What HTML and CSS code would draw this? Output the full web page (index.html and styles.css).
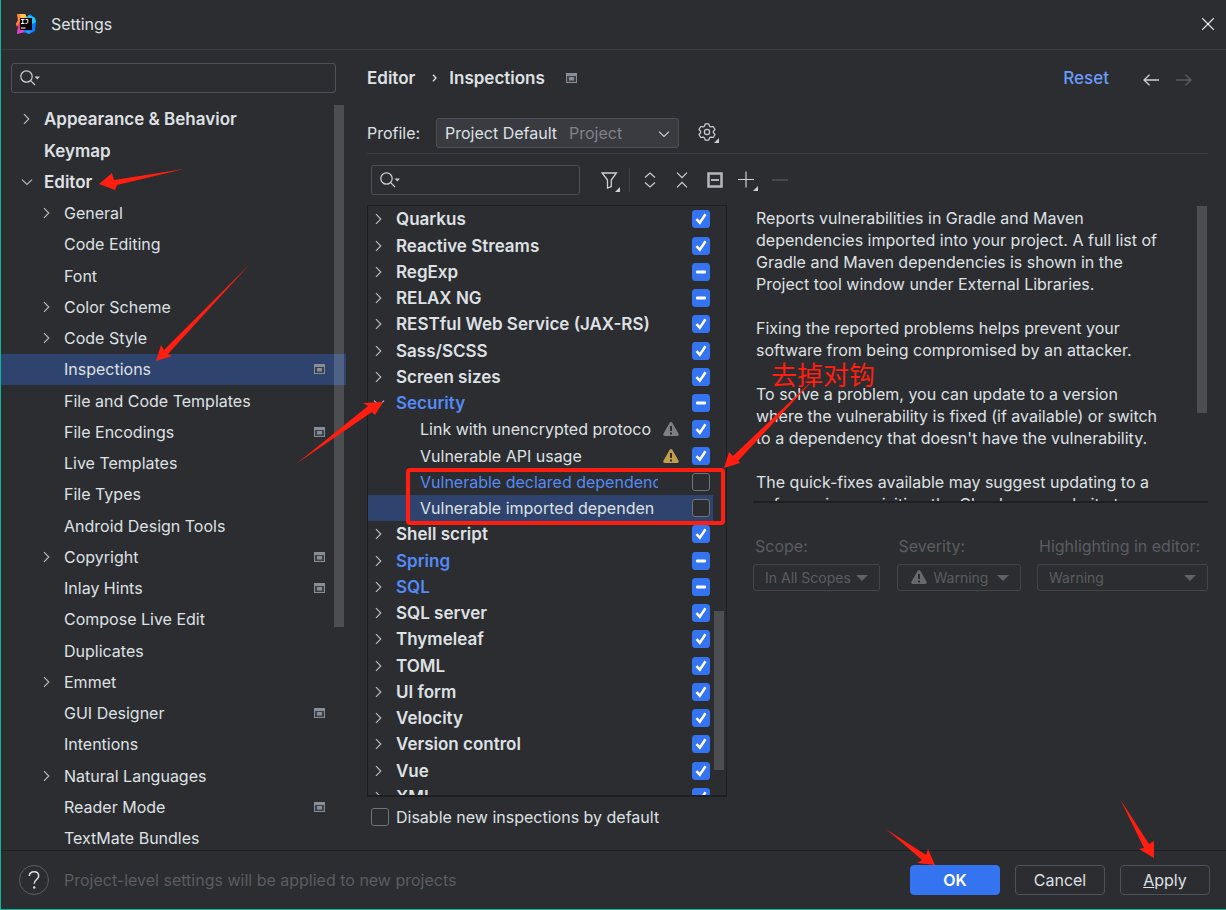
FILE: index.html
```
<!DOCTYPE html>
<html lang="en">
<head>
<meta charset="utf-8">
<title>Settings</title>
<link rel="stylesheet" href="styles.css">
</head>
<body>
<svg class="defs" aria-hidden="true">
  <symbol id="right" viewBox="0 0 12 12"><path d="M3 1.200 7.800 6 3 10.800" fill="none" stroke="currentColor" stroke-width="1.200"/></symbol>
  <symbol id="down" viewBox="0 0 12 12"><path d="M1 3.600 6 8.400l5-4.800" fill="none" stroke="currentColor" stroke-width="1.200"/></symbol>
  <symbol id="badge" viewBox="0 0 11 10"><path d="M0 0h11v10H0z" fill="#868e98"/><path d="M1 3h9v6H1z" fill="#3b4046"/><path d="M3 4h5v3.500H3z" fill="#868e98"/></symbol>
  <symbol id="search" viewBox="0 0 20 16"><circle cx="6.500" cy="6.500" r="5.700" fill="none" stroke="currentColor" stroke-width="1.200"/><path d="m10.700 10.700 4.300 4.300" stroke="currentColor" stroke-width="1.200"/><path d="M14.500 6.500H20l-2.750 3z" fill="currentColor"/></symbol>
  <symbol id="warn" viewBox="0 0 16 14"><path d="M8 0c.6 0 1 .3 1.300.8l6.300 11c.6 1-.1 2.200-1.300 2.200H1.700C.5 14-.2 12.800.4 11.800l6.300-11C7 .3 7.400 0 8 0z" fill="currentColor"/><path d="M7 4h2v5H7zM7 10.500h2v2H7z" fill="#2b2d30"/></symbol>
</svg>
<div class="window">
  <header class="titlebar">
    <svg class="logo" viewBox="0 0 20 20" aria-hidden="true">
      <path d="M1 0h8l2 5v14l-4-1-6 2 1-8-2-2 2-4z" fill="#fe2f6d"/>
      <path d="M1 0h8l2 4-7 3-3 6-1-3 2-4z" fill="#ff8a3c"/>
      <path d="m4 0 5 0 2 4-6 1z" fill="#fdc84a"/>
      <path d="m1 20 1-6 4 2 3 2z" fill="#d844d8"/>
      <path d="m11 3 3-3 5 4 1 4-1 9-6 3-5-2z" fill="#087cfa"/>
      <path d="m11 3 2-2 6 3 1 4-4 2z" fill="#21c4fb"/>
      <path d="m9 17h7l-3 3z" fill="#21a4fb"/>
      <path d="M4 4h12v12H4z" fill="#0b0509"/>
      <path d="M5 5.500h3.500M6.750 5.500v4M5 9.500h3.500M9.500 5.500h2.300v3q0 1-2.300 1M5 14h4.500" fill="none" stroke="#fff" stroke-width="1"/>
    </svg>
    <h1 class="window-title">Settings</h1>
    <button class="icon-button close" aria-label="Close"><svg viewBox="0 0 12 12"><path d="m.3.3 11.400 11.400M11.700.3.3 11.700" stroke="#fff" stroke-width="1.100"/></svg></button>
  </header>

  <div class="content">
    <aside class="sidebar">
      <label class="search side-search"><svg class="search-icon"><use href="#search"/></svg><input type="text" aria-label="Search settings"></label>
      <div class="tree-view">
        <ul class="tree" role="tree">
          <li class="node top"><svg class="chev"><use href="#right"/></svg><span>Appearance &amp; Behavior</span></li>
          <li class="node top"><i></i><span>Keymap</span></li>
          <li class="node top"><svg class="chev"><use href="#down"/></svg><span>Editor</span></li>
          <li class="node"><svg class="chev"><use href="#right"/></svg><span>General</span></li>
          <li class="node"><i></i><span>Code Editing</span></li>
          <li class="node"><i></i><span>Font</span></li>
          <li class="node"><svg class="chev"><use href="#right"/></svg><span>Color Scheme</span></li>
          <li class="node"><svg class="chev"><use href="#right"/></svg><span>Code Style</span></li>
          <li class="node selected"><i></i><span>Inspections</span><svg class="badge"><use href="#badge"/></svg></li>
          <li class="node"><i></i><span>File and Code Templates</span></li>
          <li class="node"><i></i><span>File Encodings</span><svg class="badge"><use href="#badge"/></svg></li>
          <li class="node"><i></i><span>Live Templates</span></li>
          <li class="node"><i></i><span>File Types</span></li>
          <li class="node"><i></i><span>Android Design Tools</span></li>
          <li class="node"><svg class="chev"><use href="#right"/></svg><span>Copyright</span><svg class="badge"><use href="#badge"/></svg></li>
          <li class="node"><i></i><span>Inlay Hints</span><svg class="badge"><use href="#badge"/></svg></li>
          <li class="node"><i></i><span>Compose Live Edit</span></li>
          <li class="node"><i></i><span>Duplicates</span></li>
          <li class="node"><svg class="chev"><use href="#right"/></svg><span>Emmet</span></li>
          <li class="node"><i></i><span>GUI Designer</span><svg class="badge"><use href="#badge"/></svg></li>
          <li class="node"><i></i><span>Intentions</span></li>
          <li class="node"><svg class="chev"><use href="#right"/></svg><span>Natural Languages</span></li>
          <li class="node"><i></i><span>Reader Mode</span><svg class="badge"><use href="#badge"/></svg></li>
          <li class="node"><i></i><span>TextMate Bundles</span></li>
        </ul>
        <div class="thumb side-thumb"></div>
      </div>
    </aside>

    <main class="main">
      <div class="crumbs">
        <span>Editor</span><svg class="crumb-sep" viewBox="0 0 5 8"><path d="M1 .7 4 4 1 7.300" fill="none" stroke="currentColor" stroke-width="1.300"/></svg><span>Inspections</span>
        <svg class="badge"><use href="#badge"/></svg>
        <a class="reset" href="#">Reset</a>
        <button class="icon-button nav" aria-label="Back"><svg viewBox="0 0 16 12"><path d="M6.500.7 1 6l5.500 5.300M1 6h15" fill="none" stroke="currentColor" stroke-width="1.300"/></svg></button>
        <button class="icon-button nav" aria-label="Forward" disabled><svg viewBox="0 0 16 12"><path d="M9.500.7 15 6l-5.500 5.300M15 6H0" fill="none" stroke="currentColor" stroke-width="1.300"/></svg></button>
      </div>

      <div class="profile">
        <label for="profile">Profile:</label>
        <div class="profile-select">
          <select id="profile"><option>Project Default</option></select>
          <span class="profile-scope">Project</span>
          <svg class="select-chev"><use href="#down"/></svg>
        </div>
        <button class="icon-button gear" aria-label="Profile actions"><svg viewBox="0 0 22 20"><path d="M7.100 1.200h3.800l.9 2.500 1.300.8 2.700-.5 1.900 3.300-1.800 2v1.400l1.800 2-1.900 3.300-2.700-.5-1.300.8-.9 2.500H7.100l-.9-2.500-1.300-.8-2.700.5-1.900-3.300 1.800-2V9.300l-1.800-2L2.200 4l2.700.5 1.300-.8z" transform="translate(.7 -.2) scale(.92)" fill="none" stroke="currentColor" stroke-width="1.300" stroke-linejoin="round"/><circle cx="9" cy="9" r="2.600" fill="none" stroke="currentColor" stroke-width="1.200"/><path d="M21 15v5h-5z" fill="currentColor"/></svg></button>
      </div>

      <div class="inspection-pane">
        <section class="left">
          <div class="toolbar">
            <label class="search"><svg class="search-icon"><use href="#search"/></svg><input type="text" aria-label="Search inspections"></label>
            <button class="icon-button filter" aria-label="Filter"><svg viewBox="0 0 20 20"><path d="M1.200 1h14.200L10.300 8v6.500L6.500 16V8z" fill="none" stroke="currentColor" stroke-width="1.300"/><path d="M19 15v5h-5z" fill="currentColor"/></svg></button>
            <span class="rule"></span>
            <button class="icon-button tool" aria-label="Expand all"><svg viewBox="0 0 12 16"><path d="M1 5.500 6 1l5 4.500M1 10.500 6 15l5-4.500" fill="none" stroke="currentColor" stroke-width="1.200"/></svg></button>
            <button class="icon-button tool" aria-label="Collapse all"><svg viewBox="0 0 12 16"><path d="m1 .7 5 5 5-5M1 15.300l5-5 5 5" fill="none" stroke="currentColor" stroke-width="1.200"/></svg></button>
            <button class="icon-button square" aria-label="Reset to empty"><svg viewBox="0 0 16 16"><path d="M1.500 1.500h13v13h-13z" fill="none" stroke="currentColor" stroke-width="2.500"/><path d="M4 8h8" stroke="currentColor" stroke-width="2"/></svg></button>
            <button class="icon-button plus" aria-label="Add"><svg viewBox="0 0 20 20"><path d="M0 8.500h16M8 .5v16" stroke="currentColor" stroke-width="1.200"/><path d="M20 15v5h-5z" fill="currentColor"/></svg></button>
            <button class="icon-button minus" aria-label="Remove" disabled><svg viewBox="0 0 16 2"><path d="M0 1h16" stroke="currentColor" stroke-width="1.200"/></svg></button>
          </div>
          <div class="list">
            <ul class="rows">
              <li class="row"><svg class="chev"><use href="#right"/></svg><label for="c1">Quarkus</label><i></i><input type="checkbox" id="c1" checked></li>
              <li class="row"><svg class="chev"><use href="#right"/></svg><label for="c2">Reactive Streams</label><i></i><input type="checkbox" id="c2" checked></li>
              <li class="row"><svg class="chev"><use href="#right"/></svg><label for="c3">RegExp</label><i></i><input type="checkbox" id="c3" class="partial"></li>
              <li class="row"><svg class="chev"><use href="#right"/></svg><label for="c4">RELAX NG</label><i></i><input type="checkbox" id="c4" class="partial"></li>
              <li class="row"><svg class="chev"><use href="#right"/></svg><label for="c5">RESTful Web Service (JAX-RS)</label><i></i><input type="checkbox" id="c5" checked></li>
              <li class="row"><svg class="chev"><use href="#right"/></svg><label for="c6">Sass/SCSS</label><i></i><input type="checkbox" id="c6" checked></li>
              <li class="row"><svg class="chev"><use href="#right"/></svg><label for="c7">Screen sizes</label><i></i><input type="checkbox" id="c7" checked></li>
              <li class="row changed"><svg class="chev"><use href="#down"/></svg><label for="c8">Security</label><i></i><input type="checkbox" id="c8" class="partial"></li>
              <li class="row child"><i></i><label for="c9">Link with unencrypted protoco</label><svg class="warn weak"><use href="#warn"/></svg><input type="checkbox" id="c9" checked></li>
              <li class="row child"><i></i><label for="c10">Vulnerable API usage</label><svg class="warn"><use href="#warn"/></svg><input type="checkbox" id="c10" checked></li>
              <li class="row child changed"><i></i><label for="c11">Vulnerable declared dependency</label><i></i><input type="checkbox" id="c11"></li>
              <li class="row child selected"><i></i><label for="c12">Vulnerable imported dependen</label><i></i><input type="checkbox" id="c12"></li>
              <li class="row"><svg class="chev"><use href="#right"/></svg><label for="c13">Shell script</label><i></i><input type="checkbox" id="c13" checked></li>
              <li class="row changed"><svg class="chev"><use href="#right"/></svg><label for="c14">Spring</label><i></i><input type="checkbox" id="c14" class="partial"></li>
              <li class="row changed"><svg class="chev"><use href="#right"/></svg><label for="c15">SQL</label><i></i><input type="checkbox" id="c15" class="partial"></li>
              <li class="row"><svg class="chev"><use href="#right"/></svg><label for="c16">SQL server</label><i></i><input type="checkbox" id="c16" checked></li>
              <li class="row"><svg class="chev"><use href="#right"/></svg><label for="c17">Thymeleaf</label><i></i><input type="checkbox" id="c17" checked></li>
              <li class="row"><svg class="chev"><use href="#right"/></svg><label for="c18">TOML</label><i></i><input type="checkbox" id="c18" checked></li>
              <li class="row"><svg class="chev"><use href="#right"/></svg><label for="c19">UI form</label><i></i><input type="checkbox" id="c19" checked></li>
              <li class="row"><svg class="chev"><use href="#right"/></svg><label for="c20">Velocity</label><i></i><input type="checkbox" id="c20" checked></li>
              <li class="row"><svg class="chev"><use href="#right"/></svg><label for="c21">Version control</label><i></i><input type="checkbox" id="c21" checked></li>
              <li class="row"><svg class="chev"><use href="#right"/></svg><label for="c22">Vue</label><i></i><input type="checkbox" id="c22" checked></li>
              <li class="row"><svg class="chev"><use href="#right"/></svg><label for="c23">XML</label><i></i><input type="checkbox" id="c23" checked></li>
            </ul>
            <div class="thumb list-thumb"></div>
          </div>
          <div class="disable-new"><input type="checkbox" id="disable"><label for="disable">Disable new inspections by default</label></div>
        </section>

        <section class="right">
          <div class="description">
            <p>Reports vulnerabilities in Gradle and Maven dependencies imported into your project. A full list of Gradle and Maven dependencies is shown in the Project tool window under External Libraries.</p>
            <p>Fixing the reported problems helps prevent your software from being compromised by an attacker.</p>
            <p>To solve a problem, you can update to a version where the vulnerability is fixed (if available) or switch to a dependency that doesn't have the vulnerability.</p>
            <p>The quick-fixes available may suggest updating to a safe version or visiting the Checkmarx website to</p>
            <div class="thumb desc-thumb"></div>
          </div>
          <div class="options">
            <div class="option scope"><label for="scope">Scope:</label><div class="combo"><select id="scope" disabled><option>In All Scopes</option></select></div></div>
            <div class="option severity"><label for="severity">Severity:</label><div class="combo with-icon"><svg class="warn"><use href="#warn"/></svg><select id="severity" disabled><option>Warning</option></select></div></div>
            <div class="option highlight"><label for="highlight">Highlighting in editor:</label><div class="combo"><select id="highlight" disabled><option>Warning</option></select></div></div>
          </div>
        </section>
      </div>
    </main>
  </div>

  <footer class="footer">
    <button class="help" aria-label="Help"><svg viewBox="0 0 12 18"><path d="M1.300 5C1.300 2.300 3.300.8 6 .8s4.700 1.600 4.700 4.100c0 3.600-4.500 3.700-4.500 7.800" fill="none" stroke="currentColor" stroke-width="1.500"/><circle cx="6.200" cy="16.500" r="1.200" fill="currentColor"/></svg></button>
    <span class="hint">Project-level settings will be applied to new projects</span>
    <button class="button primary">OK</button>
    <button class="button">Cancel</button>
    <button class="button"><u>A</u>pply</button>
    <svg class="marks footer-marks" viewBox="0 0 340 70" aria-hidden="true"><path d="m0 31 40 26 2-6 7 16-18-2 5-3zM234 1l29 45 5-3 0 17-15-9 5-1z"/></svg>
  </footer>

  <svg class="marks top-marks" viewBox="0 0 830 540" aria-hidden="true">
    <path d="m99 184 13-11 2 7 70-11-67 16-2 5z"/>
    <path d="m156 361 5-16 3 5 86-86-82 90 4 2z"/>
    <path d="m383 402-20 1 5 3-72 58 76-52 3 3z"/>
    <path d="m724 468 5-16 4 4 84-80-79 85 2 2z"/>
    <rect x="408" y="470" width="315" height="53" rx="2" fill="none" stroke="#ff1e10" stroke-width="4"/>
  </svg>
  <span class="note" lang="zh">去掉对钩</span>
</div>
</body>
</html>
```
FILE: styles.css
```
* { box-sizing: border-box; }

body {
  margin: 0;
  background: #2b2d30;
  color: #dfe1e5;
  font: 16px/20px Inter, "Noto Sans", sans-serif;
}

ul { list-style: none; margin: 0; padding: 0; }
button, input, select { font: inherit; color: inherit; margin: 0; }
svg { display: block; flex: none; }
.defs { position: absolute; width: 0; height: 0; }

.window {
  position: relative;
  display: flex;
  flex-direction: column;
  height: 100vh;
  overflow: hidden;
  border-left: 1px solid #0fb59a;
  border-bottom: 1px solid #0fb59a;
}

.titlebar {
  display: flex;
  align-items: center;
  flex: none;
  height: 50px;
  padding: 0 12px 2px 15px;
  border-bottom: 1px solid #393b40;
}
.logo { width: 20px; height: 20px; }
.window-title { flex: 1; margin: 0 0 0 15px; font-size: 16px; font-weight: 400; }

.icon-button {
  flex: none;
  display: grid;
  place-items: center;
  padding: 0;
  border: 0;
  background: none;
  color: #ced0d6;
}
.icon-button:disabled { color: #5a5d63; }
.close svg { width: 12px; height: 12px; }

.content { display: flex; flex: 1; min-height: 0; }

.sidebar {
  display: flex;
  flex-direction: column;
  flex: none;
  width: 345px;
  padding-top: 13px;
}

.search {
  display: flex;
  align-items: center;
  flex: none;
  height: 30px;
  padding-left: 8px;
  border: 1px solid #4e5157;
  border-radius: 3px;
  color: #ced0d6;
}
.search input { flex: 1; min-width: 0; border: 0; background: none; outline: 0; }
.search-icon { width: 20px; height: 16px; }
.side-search { margin: 0 10px 11px; }

.tree-view { position: relative; flex: 1; min-height: 0; overflow: hidden; }

.node {
  display: flex;
  align-items: center;
  gap: 11px;
  height: 31px;
  padding: 0 21px 2px 40px;
}
.node:nth-child(4n+2) { height: 32px; padding-top: 1px; }
.node.top { padding-left: 20px; font-size: 17px; font-weight: 600; }
.node > i { width: 12px; }
.node > span { flex: 1; }
.selected { background: #2e436e; }
.chev { width: 12px; height: 12px; color: #b4b8bf; }
.badge { width: 11px; height: 10px; }

.thumb { position: absolute; width: 10px; background: rgba(255, 255, 255, .16); }
.side-thumb { top: 1px; right: 2px; height: 70%; }

.main {
  display: flex;
  flex-direction: column;
  flex: 1;
  min-width: 0;
  padding: 18px 18px 0 21px;
}

.crumbs { display: flex; align-items: center; height: 20px; font-size: 17px; font-weight: 600; }
.crumb-sep { width: 5px; height: 8px; margin: 0 12px 0 17px; }
.crumbs .badge { margin-left: 21px; }
.reset { margin-left: auto; margin-right: 34px; color: #6b9bfa; font-weight: 500; text-decoration: none; }
.nav { margin-top: 4px; }
.nav svg { width: 16px; height: 12px; }
.nav + .nav { margin-left: 17px; margin-right: 16px; }

.profile {
  display: flex;
  align-items: center;
  height: 66px;
  padding-top: 25px;
  border-bottom: 1px solid #393b40;
}
.profile > label { width: 69px; }
.profile-select { position: relative; width: 243px; }
.profile-select select {
  appearance: none;
  display: block;
  width: 100%;
  height: 30px;
  padding: 0 8px;
  border: 1px solid #4e5157;
  border-radius: 3px;
  background: #393b40;
}
.profile-scope { position: absolute; top: 5px; left: 133px; color: #7f8288; pointer-events: none; }
.select-chev { position: absolute; top: 10px; right: 9px; width: 12px; height: 12px; color: #ced0d6; pointer-events: none; }
.gear { margin-left: 19px; }
.gear svg { width: 22px; height: 20px; }

.inspection-pane { display: flex; flex: 1; min-height: 0; gap: 26px; }
.left { display: flex; flex-direction: column; flex: none; width: 360px; padding-top: 11px; }

.toolbar { display: flex; align-items: center; width: 430px; height: 30px; margin-bottom: 10px; padding-left: 4px; }
.toolbar .search { width: 209px; }
.filter { margin-left: 21px; padding-top: 4px; }
.filter svg, .plus svg { width: 20px; height: 20px; }
.rule { width: 1px; height: 24px; margin-left: 8px; background: #43454a; }
.tool { margin-left: 14px; }
.tool + .tool { margin-left: 20px; }
.tool svg { width: 12px; height: 16px; }
.square { margin-left: 19px; color: #b4b6ba; }
.square svg { width: 16px; height: 16px; }
.plus { margin-left: 15px; padding-top: 2px; }
.minus { margin-left: 14px; }
.minus svg { width: 16px; height: 2px; }

.list {
  position: relative;
  flex: 1;
  min-height: 0;
  overflow: hidden;
  border: 1px solid #1e1f22;
  border-bottom-width: 2px;
}
.rows { padding-right: 13px; }
.row {
  display: grid;
  grid-template-columns: 12px 1fr 16px 31px;
  align-items: center;
  height: 26px;
  padding: 0 3px 0 5px;
  font-size: 17px;
  font-weight: 600;
}
.row:nth-child(4n+2) { height: 27px; padding-top: 1px; }
.row label { margin: 0 5px 0 11px; overflow: hidden; white-space: nowrap; }
.row input { justify-self: end; }
.child { font-size: 16px; font-weight: 400; }
.child label { margin-left: 35px; }
.changed label { color: #548af7; }
.list-thumb { right: 2px; bottom: 25px; height: 27%; }
.warn { width: 16px; height: 14px; color: #c29e4a; }
.weak { color: #7d7f83; }

input[type="checkbox"] {
  appearance: none;
  flex: none;
  width: 18px;
  height: 18px;
  border: 1px solid #6f737a;
  border-radius: 3px;
  background: #2b2d30 center / 18px 18px no-repeat;
}
input[type="checkbox"]:checked {
  border-color: #3574f0;
  background-color: #3574f0;
  background-image: url("data:image/svg+xml,%3Csvg xmlns='http://www.w3.org/2000/svg' viewBox='0 0 18 18'%3E%3Cpath d='M4.500 9.200l3.300 3.500 5.700-8.500' fill='none' stroke='white' stroke-width='2.500'/%3E%3C/svg%3E");
}
input[type="checkbox"].partial {
  border-color: #3574f0;
  background-color: #3574f0;
  background-image: url("data:image/svg+xml,%3Csvg xmlns='http://www.w3.org/2000/svg' viewBox='0 0 18 18'%3E%3Crect x='4' y='7.500' width='10' height='3' rx='1' fill='white'/%3E%3C/svg%3E");
}

.disable-new { display: flex; align-items: center; gap: 7px; height: 53px; padding: 0 0 14px 4px; }

.right { display: flex; flex-direction: column; flex: 1; min-width: 0; padding-top: 52px; }
.description {
  position: relative;
  flex: none;
  height: 297px;
  padding: 1px 44px 0 3px;
  overflow: hidden;
  border-bottom: 2px solid #1e1f22;
  line-height: 22px;
}
.description p { margin: 0 0 22px; }
.desc-thumb { top: 0; right: 1px; height: 70%; }

.options { display: flex; justify-content: space-between; gap: 16px; padding-top: 33px; color: #5a5d63; }
.option { display: flex; flex-direction: column; gap: 8px; white-space: nowrap; }
.option label { padding-left: 2px; }
.scope { flex: 0 0 127px; }
.severity { flex: 0 0 124px; }
.highlight { flex: 0 0 171px; }
.combo { position: relative; font-size: 14px; }
.combo select {
  appearance: none;
  display: block;
  width: 100%;
  height: 27px;
  padding: 0 11px;
  border: 1px solid #43454a;
  border-radius: 3px;
  background: none;
  opacity: 1;
}
.combo::after {
  content: "";
  position: absolute;
  top: 11px;
  right: 12px;
  border: 6px solid transparent;
  border-top-color: #5f6166;
  border-bottom: 0;
}
.combo .warn { position: absolute; top: 6px; left: 14px; color: #67696d; }
.with-icon select { padding-left: 36px; }

.footer {
  position: relative;
  display: flex;
  align-items: center;
  flex: none;
  gap: 15px;
  height: 59px;
  padding: 0 16px 0 18px;
  border-top: 1px solid #1e1f22;
}
.help {
  display: grid;
  place-items: center;
  width: 30px;
  height: 30px;
  padding: 0;
  border: 1px solid #5a5d63;
  border-radius: 50%;
  background: none;
}
.help svg { width: 12px; height: 18px; }
.hint { flex: 1; color: #5a5d63; }
.button {
  width: 90px;
  height: 30px;
  padding: 0;
  border: 1px solid #4e5157;
  border-radius: 4px;
  background: none;
}
.primary { border-color: #3574f0; background: #3574f0; color: #fff; font-weight: 600; }

.marks { position: absolute; fill: #ff1e10; pointer-events: none; }
.top-marks { top: 0; left: -1px; width: 830px; height: 540px; }
.footer-marks { right: 0; bottom: 41px; width: 340px; height: 70px; }
.note {
  position: absolute;
  top: 356px;
  left: 770px;
  color: #ff1e10;
  font: 26px/36px "Noto Sans CJK SC", sans-serif;
}
```
